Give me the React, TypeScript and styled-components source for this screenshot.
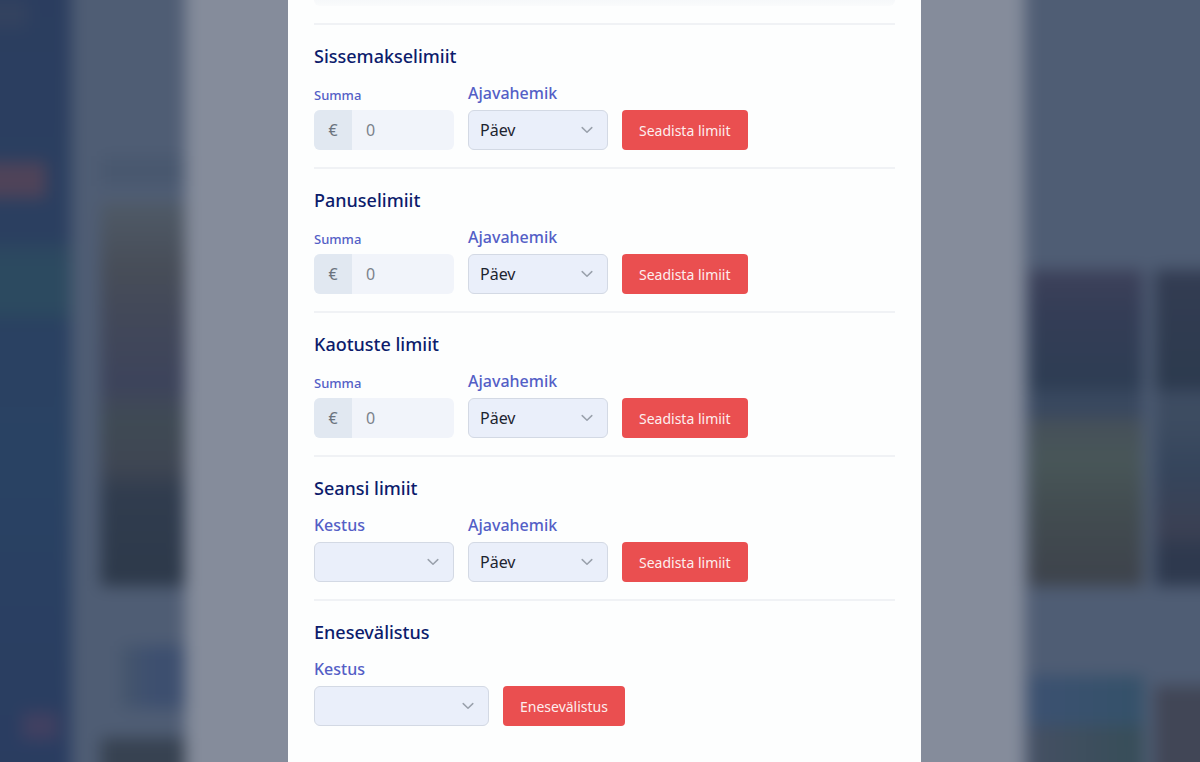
import React, { useId } from "react";
import styled, { createGlobalStyle } from "styled-components";

const GlobalStyle = createGlobalStyle`
  * { box-sizing: border-box; }
  html, body, #root { height: 100%; }
  body {
    margin: 0;
    overflow: hidden;
    background: #4f5d74;
    font-family: "Noto Sans", sans-serif;
    font-size: 16px;
  }
`;

const Page = styled.div`
  position: relative;
  height: 100%;
  overflow: hidden;
`;

/* The blurred lobby reaches past the window so that its edges do not fade. */
const Lobby = styled.div`
  position: absolute;
  inset: -24px;
  display: flex;
  align-items: stretch;
  filter: blur(8px);
`;

const Sidebar = styled.div`
  flex: 0 0 95px;
  padding-top: 24px;
  background: linear-gradient(#2b3d5f, #2b3f60 30%, #294263 60%, #2a3c60);
  display: flex;
  flex-direction: column;
  overflow: hidden;
`;

const SidebarItem = styled.div<{ $top: number; $height: number; $left?: number; $width: number; $color: string }>`
  flex: none;
  margin-top: ${(p) => p.$top}px;
  margin-left: ${(p) => p.$left ?? 0}px;
  width: ${(p) => p.$width}px;
  height: ${(p) => p.$height}px;
  background: ${(p) => p.$color};
`;

const Games = styled.div<{ $basis: number }>`
  flex: 0 0 ${(p) => p.$basis}px;
  padding-top: 24px;
  background: #4f5d74;
  display: flex;
  gap: 12px;
  overflow: hidden;
`;

const GameColumn = styled.div<{ $width: number; $indent?: number }>`
  flex: none;
  width: ${(p) => p.$width}px;
  margin-left: ${(p) => p.$indent ?? 0}px;
  display: flex;
  flex-direction: column;
`;

const Tile = styled.div<{ $gap: number; $height: number; $paint: string; $indent?: number }>`
  flex: none;
  margin-top: ${(p) => p.$gap}px;
  margin-left: ${(p) => p.$indent ?? 0}px;
  height: ${(p) => p.$height}px;
  background: ${(p) => p.$paint};
`;

const Pane = styled.div`
  flex: 1;
  background: #858c9b;
`;

const Overlay = styled.div`
  position: absolute;
  inset: 0;
  display: grid;
  grid-template-columns: 288fr 633fr 279fr;
`;

const Dialog = styled.main`
  grid-column: 2;
  padding: 0 26px;
  background: #fdfefe;
`;

const PreviousCard = styled.div`
  height: 6px;
  margin-bottom: 17px;
  border-radius: 0 0 6px 6px;
  background: linear-gradient(#f6f8fa, #fafbfc);
`;

const Section = styled.form`
  border-top: 2px solid #f0f2f5;
  padding: 17px 0;
`;

const Title = styled.h2`
  margin: 0 0 13px;
  font-size: 18px;
  line-height: 28px;
  font-weight: 500;
  color: #0c1c6c;
`;

const Row = styled.div`
  display: flex;
  flex-wrap: wrap;
  align-items: flex-end;
  gap: 14px;
`;

const Field = styled.div<{ $wide?: boolean }>`
  width: ${(p) => (p.$wide ? 175 : 140)}px;
  display: flex;
  flex-direction: column;
  gap: 7px;
`;

const Label = styled.label<{ $small?: boolean }>`
  font-size: ${(p) => (p.$small ? 13 : 16)}px;
  line-height: ${(p) => (p.$small ? 16 : 20)}px;
  font-weight: 500;
  color: #545fc6;
`;

const AmountBox = styled.div`
  height: 40px;
  display: flex;
  border-radius: 6px;
  overflow: hidden;
  background: #f1f4fa;
`;

const Currency = styled.span`
  flex: 0 0 38px;
  display: flex;
  align-items: center;
  justify-content: center;
  background: #e1e8f1;
  color: #6a737e;
`;

const AmountInput = styled.input`
  flex: 1;
  min-width: 0;
  padding: 0 14px;
  border: 0;
  outline: 0;
  background: transparent;
  font: inherit;
  color: #495057;
  &::placeholder {
    color: #7b828b;
    opacity: 1;
  }
`;

const SelectBox = styled.div`
  position: relative;
  display: flex;
`;

const SelectInput = styled.select`
  appearance: none;
  width: 100%;
  height: 40px;
  padding: 0 36px 0 11px;
  border: 1px solid #d3d9e4;
  border-radius: 6px;
  background: #eaeffa;
  font: inherit;
  color: #1d2430;
`;

const Chevron = styled.svg`
  position: absolute;
  right: 15px;
  top: 14px;
  width: 12px;
  height: 12px;
  pointer-events: none;
`;

const SubmitButton = styled.button`
  height: 40px;
  padding: 1px 17px 0;
  border: 0;
  border-radius: 4px;
  background: #ea4f50;
  color: #fdeeee;
  font-family: inherit;
  font-size: 14px;
  line-height: 20px;
  cursor: pointer;
`;

function AmountField() {
  const id = useId();
  return (
    <Field>
      <Label $small htmlFor={id}>Summa</Label>
      <AmountBox>
        <Currency>€</Currency>
        <AmountInput id={id} inputMode="decimal" placeholder="0" />
      </AmountBox>
    </Field>
  );
}

function SelectField({ label, value, wide }: { label: string; value?: string; wide?: boolean }) {
  const id = useId();
  return (
    <Field $wide={wide}>
      <Label htmlFor={id}>{label}</Label>
      <SelectBox>
        <SelectInput id={id}>
          <option>{value ?? ""}</option>
        </SelectInput>
        <Chevron viewBox="0 0 12 12" fill="none" stroke="#9aa1ac" strokeWidth="1.5" strokeLinecap="round" strokeLinejoin="round" aria-hidden="true">
          <path d="M1.2 3.6 6 8.2l4.8-4.6" />
        </Chevron>
      </SelectBox>
    </Field>
  );
}

const amountLimits = ["Sissemakselimiit", "Panuselimiit", "Kaotuste limiit"];

export default function App() {
  return (
    <Page>
      <GlobalStyle />
      <Lobby aria-hidden="true">
        <Sidebar>
          <SidebarItem $top={0} $height={28} $width={52} $color="#33425f" />
          <SidebarItem $top={134} $height={36} $width={70} $color="#4f4359" />
          <SidebarItem $top={46} $height={78} $width={95} $color="linear-gradient(#2c465f, #2c4a60 30%, #2c4a60 80%, #2a4360)" />
          <SidebarItem $top={390} $height={28} $left={46} $width={36} $color="#414061" />
        </Sidebar>
        <Games $basis={114}>
          <GameColumn $width={84} $indent={30}>
            <Tile $gap={156} $height={30} $paint="#49586f" />
            <Tile $gap={16} $height={190} $paint="linear-gradient(#4f5a67, #474d58 35%, #424859 60%, #3c435b)" />
            <Tile $gap={0} $height={194} $paint="linear-gradient(#3f465a, #3f4a54 15%, #3f4653 38%, #303c4e 52%, #2d394a)" />
            <Tile $gap={60} $height={62} $indent={20} $paint="linear-gradient(90deg, #46566c, #3d4f70 50%, #3d4f6e)" />
            <Tile $gap={30} $height={100} $paint="#374251" />
          </GameColumn>
        </Games>
        <Pane />
        <Games $basis={199}>
          <GameColumn $width={114} $indent={4}>
            <Tile $gap={270} $height={120} $paint="linear-gradient(#3d415a, #343d56 35%, #2d3d53)" />
            <Tile $gap={0} $height={28} $paint="#39485f" />
            <Tile $gap={0} $height={168} $paint="linear-gradient(#454f59, #485658 25%, #424c50 55%, #3d424b)" />
            <Tile $gap={90} $height={50} $paint="linear-gradient(90deg, #3c5171, #345169)" />
            <Tile $gap={0} $height={60} $paint="linear-gradient(90deg, #455063, #364d58)" />
          </GameColumn>
          <GameColumn $width={69}>
            <Tile $gap={270} $height={120} $paint="linear-gradient(#333c52, #2c3a4e)" />
            <Tile $gap={0} $height={196} $paint="linear-gradient(#3d4b62, #3d4c61 15%, #35455c 40%, #3b4053 72%, #2e394e 82%)" />
            <Tile $gap={100} $height={100} $paint="#414656" />
          </GameColumn>
        </Games>
      </Lobby>
      <Overlay>
        <Dialog>
          <PreviousCard />
          {amountLimits.map((title) => (
            <Section key={title} onSubmit={(e) => e.preventDefault()}>
              <Title>{title}</Title>
              <Row>
                <AmountField />
                <SelectField label="Ajavahemik" value="Päev" />
                <SubmitButton>Seadista limiit</SubmitButton>
              </Row>
            </Section>
          ))}
          <Section onSubmit={(e) => e.preventDefault()}>
            <Title>Seansi limiit</Title>
            <Row>
              <SelectField label="Kestus" />
              <SelectField label="Ajavahemik" value="Päev" />
              <SubmitButton>Seadista limiit</SubmitButton>
            </Row>
          </Section>
          <Section onSubmit={(e) => e.preventDefault()}>
            <Title>Enesevälistus</Title>
            <Row>
              <SelectField label="Kestus" wide />
              <SubmitButton>Enesevälistus</SubmitButton>
            </Row>
          </Section>
        </Dialog>
      </Overlay>
    </Page>
  );
}
